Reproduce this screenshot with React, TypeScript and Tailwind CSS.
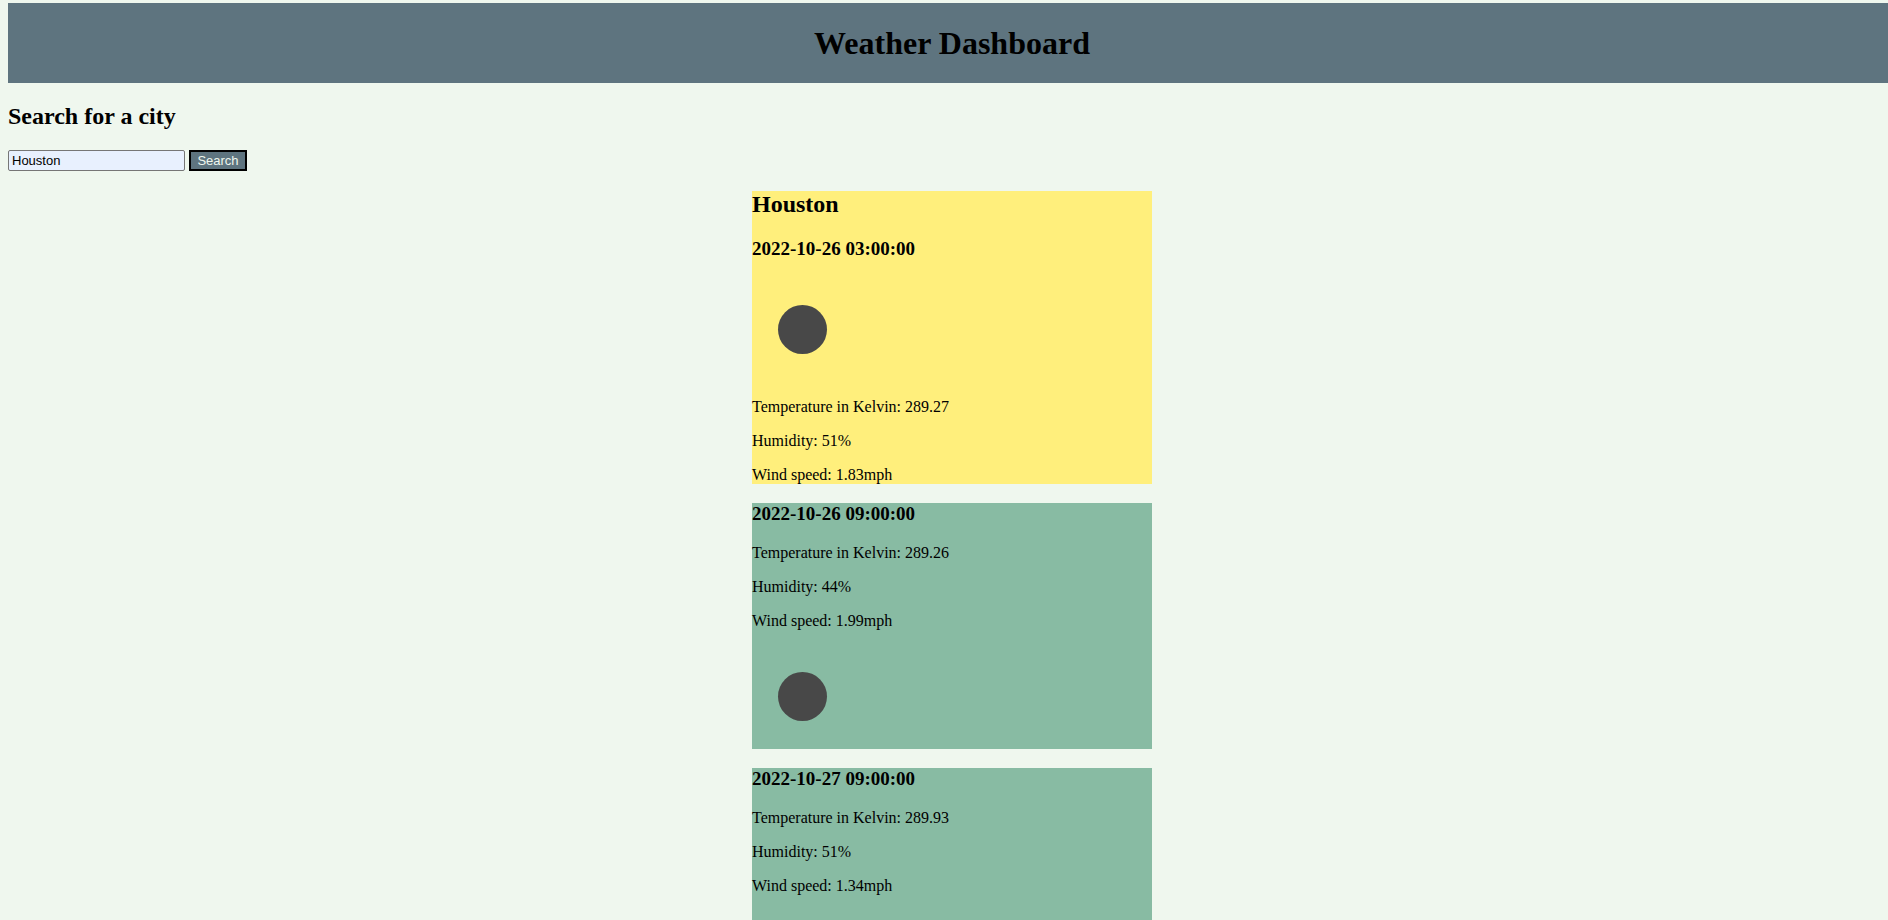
import { useState } from "react";

type Forecast = {
  time: string;
  temperature: string;
  humidity: string;
  wind: string;
};

const today: Forecast = { time: "2022-10-26 03:00:00", temperature: "289.27", humidity: "51", wind: "1.83" };

const upcoming: Forecast[] = [
  { time: "2022-10-26 09:00:00", temperature: "289.26", humidity: "44", wind: "1.99" },
  { time: "2022-10-27 09:00:00", temperature: "289.93", humidity: "51", wind: "1.34" },
];

function ConditionIcon() {
  return (
    <div className="pb-[3px]">
      <svg className="block size-[100px]" viewBox="0 0 100 100" role="img" aria-label="Clear sky">
        <circle cx="50.5" cy="50.5" r="24.5" fill="#484848" />
      </svg>
    </div>
  );
}

function Time({ value }: { value: string }) {
  return <h3 className="mb-[19px] text-[19px] leading-[22px] font-bold">{value}</h3>;
}

function Readings({ data }: { data: Forecast }) {
  return (
    <div className="flex flex-col gap-4 text-base leading-[18px]">
      <p>Temperature in Kelvin: {data.temperature}</p>
      <p>Humidity: {data.humidity}%</p>
      <p>Wind speed: {data.wind}mph</p>
    </div>
  );
}

export default function App() {
  const [city, setCity] = useState("Houston");

  return (
    <div className="min-h-screen overflow-x-hidden bg-[#eff7ee] pt-[3px] pl-2 font-['Liberation_Serif',serif] text-black">
      <div className="-mr-2">
        <header className="bg-[#5e747f] py-[21px] text-center">
          <h1 className="text-[32px] leading-[38px] font-bold">Weather Dashboard</h1>
        </header>

        <form className="pt-5" onSubmit={(e) => e.preventDefault()}>
          <h2 className="mb-5 text-2xl leading-[27px] font-bold">
            <label htmlFor="city">Search for a city</label>
          </h2>
          <div className="flex gap-1 font-['Liberation_Sans',sans-serif] text-[13px] leading-[15px]">
            <input
              id="city"
              type="text"
              value={city}
              onChange={(e) => setCity(e.target.value)}
              className="h-[21px] w-[177px] rounded-[2px] border border-[#767676] bg-[#e8f0fe] px-[3px]"
            />
            <button type="submit" className="h-[21px] w-[58px] border-2 border-black bg-[#5e747f] text-[#eff7ee]">
              Search
            </button>
          </div>
        </form>

        <main className="mx-auto mt-5 flex max-w-[400px] flex-col gap-[19px]">
          <section className="bg-[#ffef7c]">
            <h2 className="mb-5 text-2xl leading-[27px] font-bold">Houston</h2>
            <Time value={today.time} />
            <ConditionIcon />
            <div className="pt-4">
              <Readings data={today} />
            </div>
          </section>
          {upcoming.map((item) => (
            <section key={item.time} className="bg-[#88bba3]">
              <Time value={item.time} />
              <Readings data={item} />
              <div className="pt-4">
                <ConditionIcon />
              </div>
            </section>
          ))}
        </main>
      </div>
    </div>
  );
}
